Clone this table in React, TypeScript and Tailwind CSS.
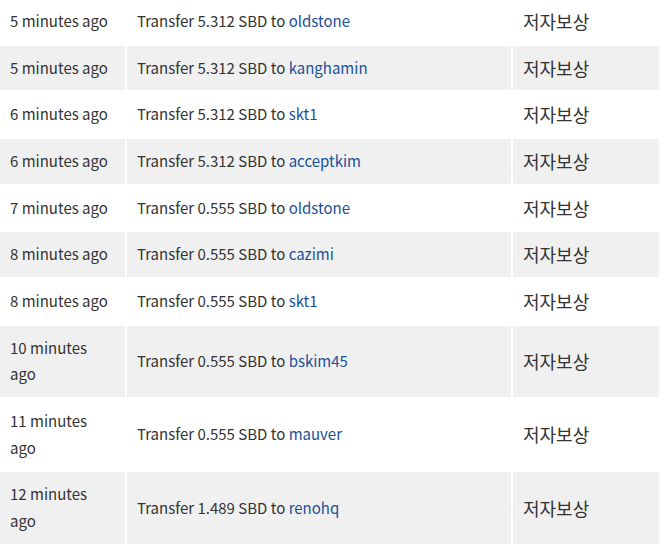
const rows: { time: string; amount: string; to: string }[] = [
  { time: "5 minutes ago", amount: "5.312", to: "oldstone" },
  { time: "5 minutes ago", amount: "5.312", to: "kanghamin" },
  { time: "6 minutes ago", amount: "5.312", to: "skt1" },
  { time: "6 minutes ago", amount: "5.312", to: "acceptkim" },
  { time: "7 minutes ago", amount: "0.555", to: "oldstone" },
  { time: "8 minutes ago", amount: "0.555", to: "cazimi" },
  { time: "8 minutes ago", amount: "0.555", to: "skt1" },
  { time: "10 minutes ago", amount: "0.555", to: "bskim45" },
  { time: "11 minutes ago", amount: "0.555", to: "mauver" },
  { time: "12 minutes ago", amount: "1.489", to: "renohq" },
];

export default function App() {
  return (
    <div className="w-[661px] h-[546px] overflow-hidden bg-white font-['Noto_Sans_CJK_KR','Noto_Sans',sans-serif] text-[15px] leading-[26.67px] text-[#333]">
      <table className="-mt-[3px] w-[661px] table-fixed border-collapse">
        <colgroup>
          <col className="w-[126px]" />
          <col className="w-[386px]" />
          <col />
        </colgroup>
        <tbody>
          {rows.map((r, i) => (
            <tr key={i} className={i % 2 === 1 ? "bg-[#f0f0f0]" : "bg-white"}>
              <td className="border-2 border-l-0 border-white pl-[10px] pr-[10px] py-[9px] align-middle">{r.time}</td>
              <td className="border-2 border-white px-[10px] py-[9px] align-middle">
                Transfer {r.amount} SBD to <a className="text-[#1a5099]">{r.to}</a>
              </td>
              <td className="border-2 border-white px-[10px] py-[9px] align-middle text-[18px]">저자보상</td>
            </tr>
          ))}
        </tbody>
      </table>
    </div>
  );
}
